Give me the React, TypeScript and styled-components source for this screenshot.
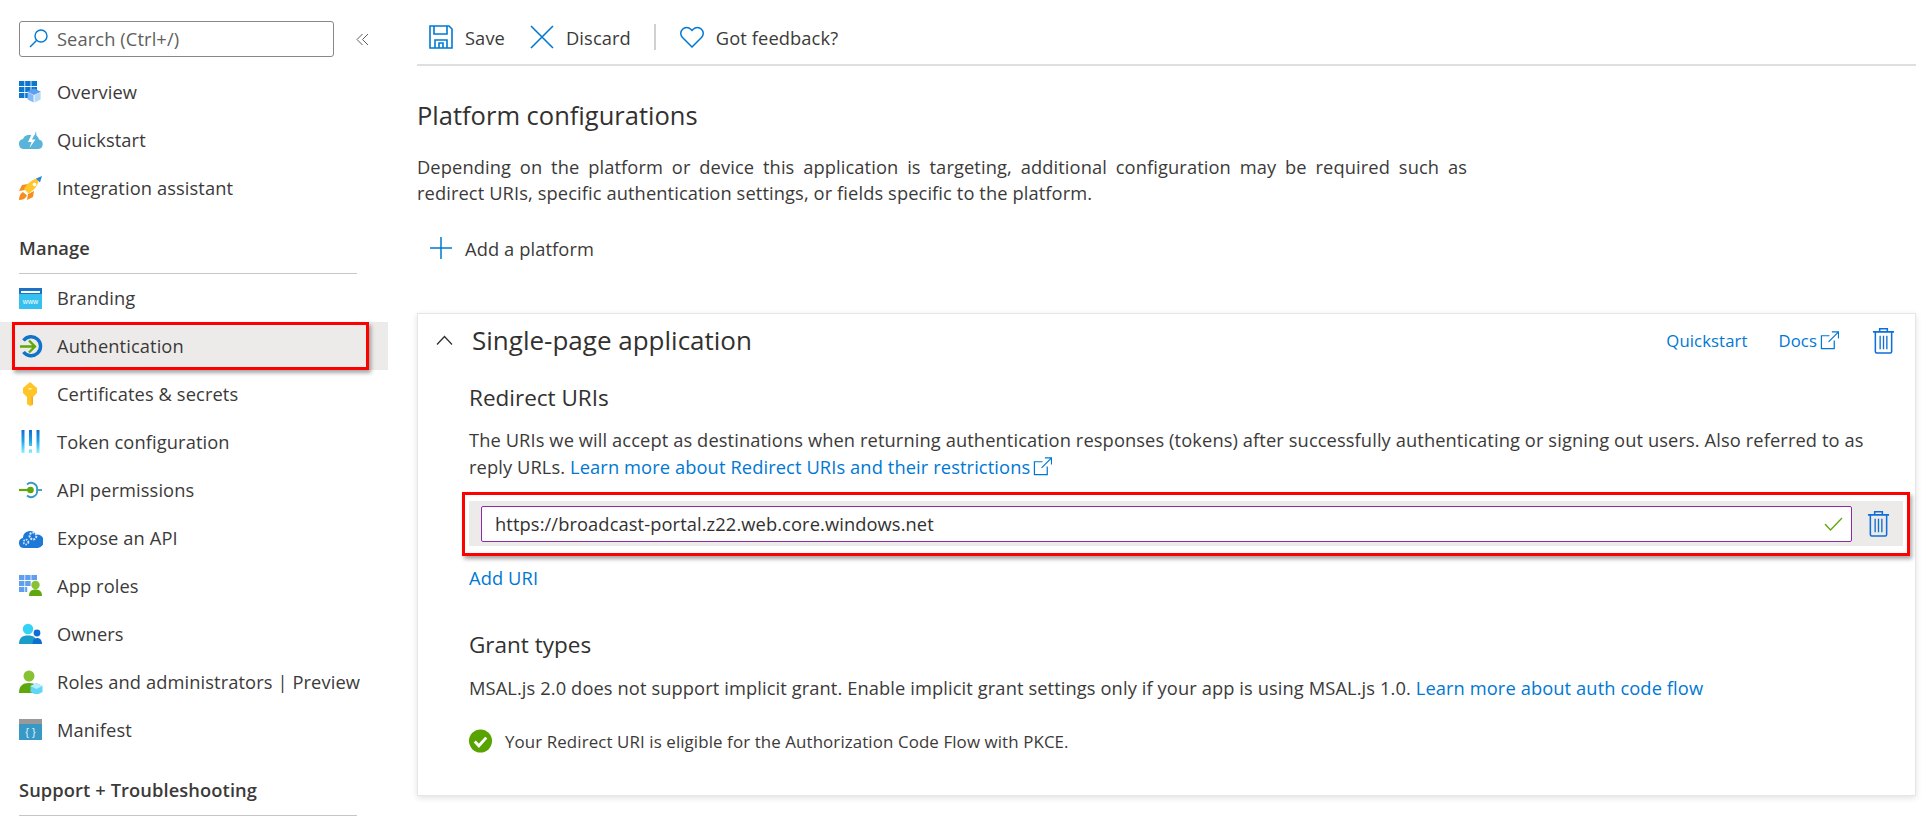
import React from 'react';
import styled, { createGlobalStyle } from 'styled-components';

const GlobalStyle = createGlobalStyle`
  html, body {
    margin: 0;
    padding: 0;
    background: #fff;
    overflow: hidden;
  }
  body {
    font-family: 'Open Sans', 'Noto Sans', 'Liberation Sans', sans-serif;
    font-size: 18.3px;
    letter-spacing: 0.1px;
    color: #3b3a39;
  }
  * { box-sizing: border-box; }
`;

const Page = styled.div`
  display: grid;
  grid-template-columns: 388px 1fr;
  width: 1929px;
  height: 823px;
  overflow: hidden;
`;

const Sidebar = styled.aside`
  padding-top: 21px;
`;

const SearchRow = styled.div`
  display: flex;
  align-items: center;
  padding-left: 19px;
  margin-bottom: 11px;
`;

const SearchBox = styled.div`
  display: flex;
  align-items: center;
  gap: 9px;
  width: 315px;
  height: 36px;
  padding: 0 0 2px 9px;
  border: 1px solid #8a8886;
  border-radius: 3px;
  color: #605e5c;
`;

const Collapse = styled.span`
  display: flex;
  margin-left: 22px;
`;

const NavRow = styled.div<{ $active?: boolean }>`
  position: relative;
  display: flex;
  align-items: center;
  gap: 14px;
  height: 48px;
  padding-left: 19px;
  padding-bottom: 1px;
  background: ${(p) => (p.$active ? '#edebe9' : 'transparent')};
`;

const NavIcon = styled.svg`
  width: 24px;
  height: 24px;
  flex: none;
`;

const SectionHead = styled.div`
  display: flex;
  align-items: center;
  height: 62px;
  width: 338px;
  margin: 0 0 0 19px;
  padding-top: 10px;
  border-bottom: 1px solid #c8c6c4;
  font-weight: 600;
  color: #3b3a39;
`;

const RedMark = styled.div`
  position: absolute;
  border: 3px solid #f00;
  box-shadow: 2px 3px 4px rgba(0, 0, 0, 0.35);
  pointer-events: none;
`;

const NavMark = styled(RedMark)`
  left: 12px;
  top: 0;
  width: 357px;
  height: 48px;
`;

const Main = styled.main`
  padding: 0 13px 0 29px;
`;

const Toolbar = styled.div`
  display: flex;
  align-items: center;
  height: 66px;
  padding: 10px 0 0 12px;
  border-bottom: 2px solid #e1dfdd;
`;

const ToolButton = styled.div`
  display: flex;
  align-items: center;
  gap: 12px;
  margin-right: 25px;
`;

const ToolDivider = styled.div`
  width: 2px;
  height: 26px;
  margin: 0 24px 0 -2px;
  background: #d2d0ce;
`;

const Title = styled.h1`
  margin: 30px 0 0;
  font-size: 25.5px;
  line-height: 38px;
  font-weight: 400;
  letter-spacing: 0;
  color: #323130;
`;

const Lead = styled.p`
  width: 1050px;
  margin: 20px 0 0;
  line-height: 26px;
  text-align: justify;
`;

const AddPlatform = styled.div`
  display: flex;
  align-items: center;
  gap: 13px;
  height: 40px;
  margin: 22px 0 0 13px;
`;

const Card = styled.section`
  width: 1499px;
  height: 483px;
  margin-top: 45px;
  padding: 0 0 0 51px;
  border: 1px solid #e6e6e6;
  box-shadow: 0 2px 6px rgba(0, 0, 0, 0.12);
`;

const CardHead = styled.header`
  display: flex;
  align-items: center;
  height: 52px;
  margin-left: -33px;
  padding-right: 20px;
`;

const Chevron = styled.span`
  display: flex;
  width: 36px;
  flex: none;
`;

const CardTitle = styled.h2`
  flex: 1;
  margin: 0;
  font-size: 26px;
  font-weight: 400;
  letter-spacing: 0;
  color: #323130;
`;

const LinkText = styled.a`
  display: inline-flex;
  align-items: center;
  gap: 3px;
  color: #0078d4;
`;

const HeadLinks = styled.div`
  display: flex;
  align-items: center;
  gap: 31px;
  margin-right: 33px;
  font-size: 16.7px;
`;

const SubTitle = styled.h3`
  margin: 15px 0 0;
  font-size: 22.5px;
  line-height: 34px;
  font-weight: 400;
  letter-spacing: 0;
  color: #323130;
`;

const Body = styled.p`
  margin: 11px 0 0;
  width: 1420px;
  line-height: 27px;
`;

const UriRow = styled.div`
  position: relative;
  display: flex;
  align-items: center;
  gap: 15px;
  width: 1434px;
  height: 45px;
  margin: 21px 0 0;
  padding: 0 0 0 12px;
  background: #edebe9;
`;

const UriMark = styled(RedMark)`
  left: -7px;
  top: -9px;
  width: 1448px;
  height: 64px;
`;

const UriInput = styled.div`
  display: flex;
  align-items: center;
  justify-content: space-between;
  width: 1371px;
  height: 36px;
  padding: 0 8px 0 13px;
  background: #fff;
  border: 1px solid #8a2da5;
  border-radius: 2px;
  color: #323130;
`;

const AddUri = styled.a`
  display: block;
  margin-top: 19px;
  line-height: 26px;
  color: #0078d4;
`;

const GrantTitle = styled(SubTitle)`
  margin-top: 37px;
`;

const GrantBody = styled(Body)`
  margin-top: 12px;
`;

const Eligible = styled.div`
  display: flex;
  align-items: center;
  gap: 13px;
  margin-top: 28px;
  font-size: 16.9px;
`;

const blue = '#0078d4';

const Trash = () => (
  <svg width="23" height="27" viewBox="0 0 24 28" fill="none" stroke="#0f6fd8" strokeWidth="1.6">
    <path d="M1 5h22M8 5V1.8h8V5M3.5 5v20.5a1.5 1.5 0 0 0 1.5 1.5h14a1.5 1.5 0 0 0 1.5-1.5V5" />
    <path d="M8.5 9v14M12 9v14M15.500 9v14" strokeWidth="1.4" />
  </svg>
);

const External = () => (
  <svg width="19" height="19" viewBox="0 0 20 20" fill="none" stroke={blue} strokeWidth="1.3">
    <path d="M10 5H1.5v13.5H15V10M9 11.5 19 1.5M12.5 1h7v7" />
  </svg>
);

const navIcons: Record<string, React.ReactNode> = {
  overview: (
    <>
      <path fill="#0a78d0" d="M0 1h5.4v5H0zM6.2 1h5.4v5H6.2zM12.4 1H18v5h-5.6zM0 7h5.4v5H0zM6.2 7h5.4v5H6.2zM12.4 7H18v5h-5.6zM0 13h5.4v5H0zM6.2 13h3v5h-3z" />
      <path fill="#5ea0ef" d="m15 8.5 7 3.2-7 3.4-7-3.4z" />
      <path fill="#83b9f9" d="m8.6 12.2 6 3v7.3l-6-3z" />
      <path fill="#b3d9f5" d="m21.6 12.2-6 3v7.3l6-3z" />
    </>
  ),
  quickstart: (
    <>
      <path fill="#59b4d9" d="M5 21a5 5 0 0 1-1-9.900A6 6 0 0 1 9 7h6a6 6 0 0 1 5 4.400A4.900 4.900 0 0 1 19.500 21z" />
      <path fill="#fff" d="M13 5.500 9 14h3.500l-2 6 6-8.500h-3.500l3-6z" />
      <path fill="#59b4d9" d="m17 3-1.500 5h2z" />
    </>
  ),
  integration: (
    <>
      <path fill="#f78d1e" d="M9 8 3 9l-3 6 6-1zM15 15l-1 6-6 3 1-6z" />
      <path fill="#ffc72c" d="M5 13C8 7 14 3 20 2c-.5 7-4.500 12-10.500 15.500z" />
      <path fill="#2b88d8" d="m17 2.500 6-2.500-2 6.500z" />
      <circle cx="15.500" cy="8.500" r="1.800" fill="#fff" />
      <path fill="#f78d1e" d="M0 24c0-4 1.500-6.500 4-8l4 3.500C6.500 22.500 4 24 0 24z" />
    </>
  ),
  branding: (
    <>
      <path fill="#1b72c4" d="M0 2h23v21H0z" />
      <path fill="#fff" d="M2 5h19v2H2z" />
      <path fill="#35c0ef" d="M0 8h23v15H0z" />
      <text x="11.500" y="18" textAnchor="middle" fontSize="7" fill="#fff" fontFamily="Liberation Sans">www</text>
    </>
  ),
  auth: (
    <>
      <path fill="none" stroke="#0f73c9" strokeWidth="3.400" d="M4.500 6.500A9.500 9.500 0 1 1 4.500 18" />
      <path fill="none" stroke="#5ea70c" strokeWidth="2.400" d="M1 12.500h14.500M10 6.500l6 6-6 6" />
    </>
  ),
  key: (
    <g transform="translate(3 0)">
      <path fill="#ffc425" d="M8 0 15 6v5l-4 4v8l-3 1-3-2v-7L1 11V6z" />
      <path fill="#f9a825" d="M9.500 14v9l1.500-1.500V15z" />
      <path fill="#fff3b0" d="M6.500 6h3v1.500h-3z" />
    </g>
  ),
  token: (
    <>
      <defs>
        <linearGradient id="tokenBar" x1="0" y1="0" x2="0" y2="1">
          <stop offset="0" stopColor="#0f6fd0" />
          <stop offset=".5" stopColor="#1fa8ea" />
          <stop offset="1" stopColor="#8ff0ff" />
        </linearGradient>
      </defs>
      <path fill="url(#tokenBar)" d="M2.500 0h3v23h-3zM10 0h3v16h-3zM10 19.500h3V23h-3zM17.500 0h3v23h-3z" />
    </>
  ),
  api: (
    <>
      <path fill="none" stroke="#3999c6" strokeWidth="1.800" d="M8 6.500A6 6 0 0 1 18 12a6 6 0 0 1-10 5.500" />
      <path stroke="#3999c6" strokeWidth="1.800" d="M18 12h5" />
      <path stroke="#5ea70c" strokeWidth="2.200" d="M0 12h11" />
      <circle cx="11.500" cy="12" r="3.300" fill="#5ea70c" />
    </>
  ),
  expose: (
    <>
      <path fill="#1e78d6" d="M5 22a5 5 0 0 1-1-9.900A7 7 0 0 1 17 8.500a6.800 6.800 0 0 1 2 13.500z" />
      <circle cx="14" cy="10" r="3.400" fill="none" stroke="#cfe6fb" strokeWidth="2" strokeDasharray="2 1" />
      <circle cx="7" cy="16" r="2.400" fill="none" stroke="#cfe6fb" strokeWidth="1.800" strokeDasharray="1.500 1" />
    </>
  ),
  approles: (
    <>
      <path fill="#5ea0ef" d="M0 1h5.400v5H0zM6.200 1h5.400v5H6.200zM12.400 1H18v5h-5.600zM0 7h5.400v5H0zM6.200 7h5.400v5H6.200zM0 13h5.400v5H0zM6.200 13h2v5h-2z" />
      <circle cx="16.500" cy="11" r="4.200" fill="#86c232" />
      <path fill="#5ea70c" d="M10 22c0-4.500 2.500-6.500 6.500-6.500S23 17.500 23 22z" />
    </>
  ),
  owners: (
    <>
      <circle cx="9" cy="7" r="5.200" fill="#32d4f5" />
      <path fill="#1b9dc9" d="M0 22c0-6 3-8.500 9-8.500s9 2.500 9 8.500z" />
      <circle cx="18" cy="11" r="3.400" fill="#0f6fd0" />
      <path fill="#0f6fd0" d="M13.500 22c0-4 1.500-6 4.500-6s5 2 5 6z" />
    </>
  ),
  roles: (
    <>
      <circle cx="10" cy="6" r="5.500" fill="#86c232" />
      <path fill="#5ea70c" d="M0 23c0-7 3.500-10 10-10s9 3 10 10z" />
      <path fill="#5ed6f5" d="m17.500 13 6 3v6l-6 3-6-3v-6z" />
      <path fill="#b5eefc" d="m17.500 13 6 3-6 3-6-3z" />
    </>
  ),
  manifest: (
    <>
      <path fill="#999" d="M0 1h23v5H0z" />
      <path fill="#3999c6" d="M0 6h23v16H0z" />
      <text x="11.500" y="18" textAnchor="middle" fontSize="11" fill="#dff2fb" fontFamily="Liberation Sans">{'{ }'}</text>
    </>
  ),
};

const topNav = [
  { icon: 'overview', label: 'Overview' },
  { icon: 'quickstart', label: 'Quickstart' },
  { icon: 'integration', label: 'Integration assistant' },
];

const manageNav = [
  { icon: 'branding', label: 'Branding' },
  { icon: 'auth', label: 'Authentication', active: true },
  { icon: 'key', label: 'Certificates & secrets' },
  { icon: 'token', label: 'Token configuration' },
  { icon: 'api', label: 'API permissions' },
  { icon: 'expose', label: 'Expose an API' },
  { icon: 'approles', label: 'App roles' },
  { icon: 'owners', label: 'Owners' },
  { icon: 'roles', label: 'Roles and administrators | Preview' },
  { icon: 'manifest', label: 'Manifest' },
];

const NavItem = ({ icon, label, active }: { icon: string; label: string; active?: boolean }) => (
  <NavRow $active={active}>
    <NavIcon viewBox="0 0 24 24">{navIcons[icon]}</NavIcon>
    <span>{label}</span>
    {active && <NavMark />}
  </NavRow>
);

export default function App() {
  return (
    <Page>
      <GlobalStyle />
      <Sidebar>
        <SearchRow>
          <SearchBox>
            <svg width="19" height="19" viewBox="0 0 19 19" fill="none" stroke={blue} strokeWidth="1.400">
              <circle cx="12" cy="7" r="6" />
              <path d="M7.500 11.500 1 18" />
            </svg>
            <span>Search (Ctrl+/)</span>
          </SearchBox>
          <Collapse>
            <svg width="13" height="13" viewBox="0 0 13 13" fill="none" stroke="#605e5c" strokeWidth="1">
              <path d="M6.500 1 1 6.500 6.500 12M12 1 6.500 6.500 12 12" />
            </svg>
          </Collapse>
        </SearchRow>
        {topNav.map((item) => (
          <NavItem key={item.label} {...item} />
        ))}
        <SectionHead>Manage</SectionHead>
        {manageNav.map((item) => (
          <NavItem key={item.label} {...item} />
        ))}
        <SectionHead>Support + Troubleshooting</SectionHead>
      </Sidebar>
      <Main>
        <Toolbar>
          <ToolButton>
            <svg width="24" height="24" viewBox="0 0 24 24" fill="none" stroke={blue} strokeWidth="1.600">
              <path d="M1 1h19l3 3v19H1z" />
              <path d="M5 1v8h13V1M6 23v-8h12v8M10 23v-5h4v5" />
            </svg>
            <span>Save</span>
          </ToolButton>
          <ToolButton>
            <svg width="24" height="24" viewBox="0 0 24 24" fill="none" stroke={blue} strokeWidth="1.600">
              <path d="M1 1l22 22M23 1 1 23" />
            </svg>
            <span>Discard</span>
          </ToolButton>
          <ToolDivider />
          <ToolButton>
            <svg width="24" height="22" viewBox="0 0 24 22" fill="none" stroke={blue} strokeWidth="1.500">
              <path d="M12 21 2.500 11.500a5.800 5.800 0 0 1 0-8.300 5.800 5.800 0 0 1 8.300 0L12 4.500l1.200-1.300a5.800 5.800 0 0 1 8.300 0 5.800 5.800 0 0 1 0 8.300z" />
            </svg>
            <span>Got feedback?</span>
          </ToolButton>
        </Toolbar>
        <Title>Platform configurations</Title>
        <Lead>
          Depending on the platform or device this application is targeting, additional configuration may be required such as
          redirect URIs, specific authentication settings, or fields specific to the platform.
        </Lead>
        <AddPlatform>
          <svg width="22" height="22" viewBox="0 0 22 22" stroke={blue} strokeWidth="1.500">
            <path d="M11 0v22M0 11h22" />
          </svg>
          <span>Add a platform</span>
        </AddPlatform>
        <Card>
          <CardHead>
            <Chevron>
              <svg width="17" height="10" viewBox="0 0 17 10" fill="none" stroke="#323130" strokeWidth="1.300">
                <path d="M1 9.500 8.500 1.500 16 9.500" />
              </svg>
            </Chevron>
            <CardTitle>Single-page application</CardTitle>
            <HeadLinks>
              <LinkText>Quickstart</LinkText>
              <LinkText>
                Docs
                <External />
              </LinkText>
            </HeadLinks>
            <Trash />
          </CardHead>
          <SubTitle>Redirect URIs</SubTitle>
          <Body>
            The URIs we will accept as destinations when returning authentication responses (tokens) after successfully authenticating or signing out users. Also referred to as
            <br />
            reply URLs. <LinkText>Learn more about Redirect URIs and their restrictions<External /></LinkText>
          </Body>
          <UriRow>
            <UriInput>
              <span>https://broadcast-portal.z22.web.core.windows.net</span>
              <svg width="19" height="14" viewBox="0 0 19 14" fill="none" stroke="#5ea70c" strokeWidth="1.300">
                <path d="M1 7l5.500 6L18 1" />
              </svg>
            </UriInput>
            <Trash />
            <UriMark />
          </UriRow>
          <AddUri>Add URI</AddUri>
          <GrantTitle>Grant types</GrantTitle>
          <GrantBody>
            MSAL.js 2.0 does not support implicit grant. Enable implicit grant settings only if your app is using MSAL.js 1.0. <LinkText>Learn more about auth code flow</LinkText>
          </GrantBody>
          <Eligible>
            <svg width="23" height="24" viewBox="0 0 24 24">
              <circle cx="12" cy="12" r="12" fill="#57a300" />
              <path d="M6 12.500l4.300 4.500L18 8.500" fill="none" stroke="#fff" strokeWidth="3" />
            </svg>
            <span>Your Redirect URI is eligible for the Authorization Code Flow with PKCE.</span>
          </Eligible>
        </Card>
      </Main>
    </Page>
  );
}
